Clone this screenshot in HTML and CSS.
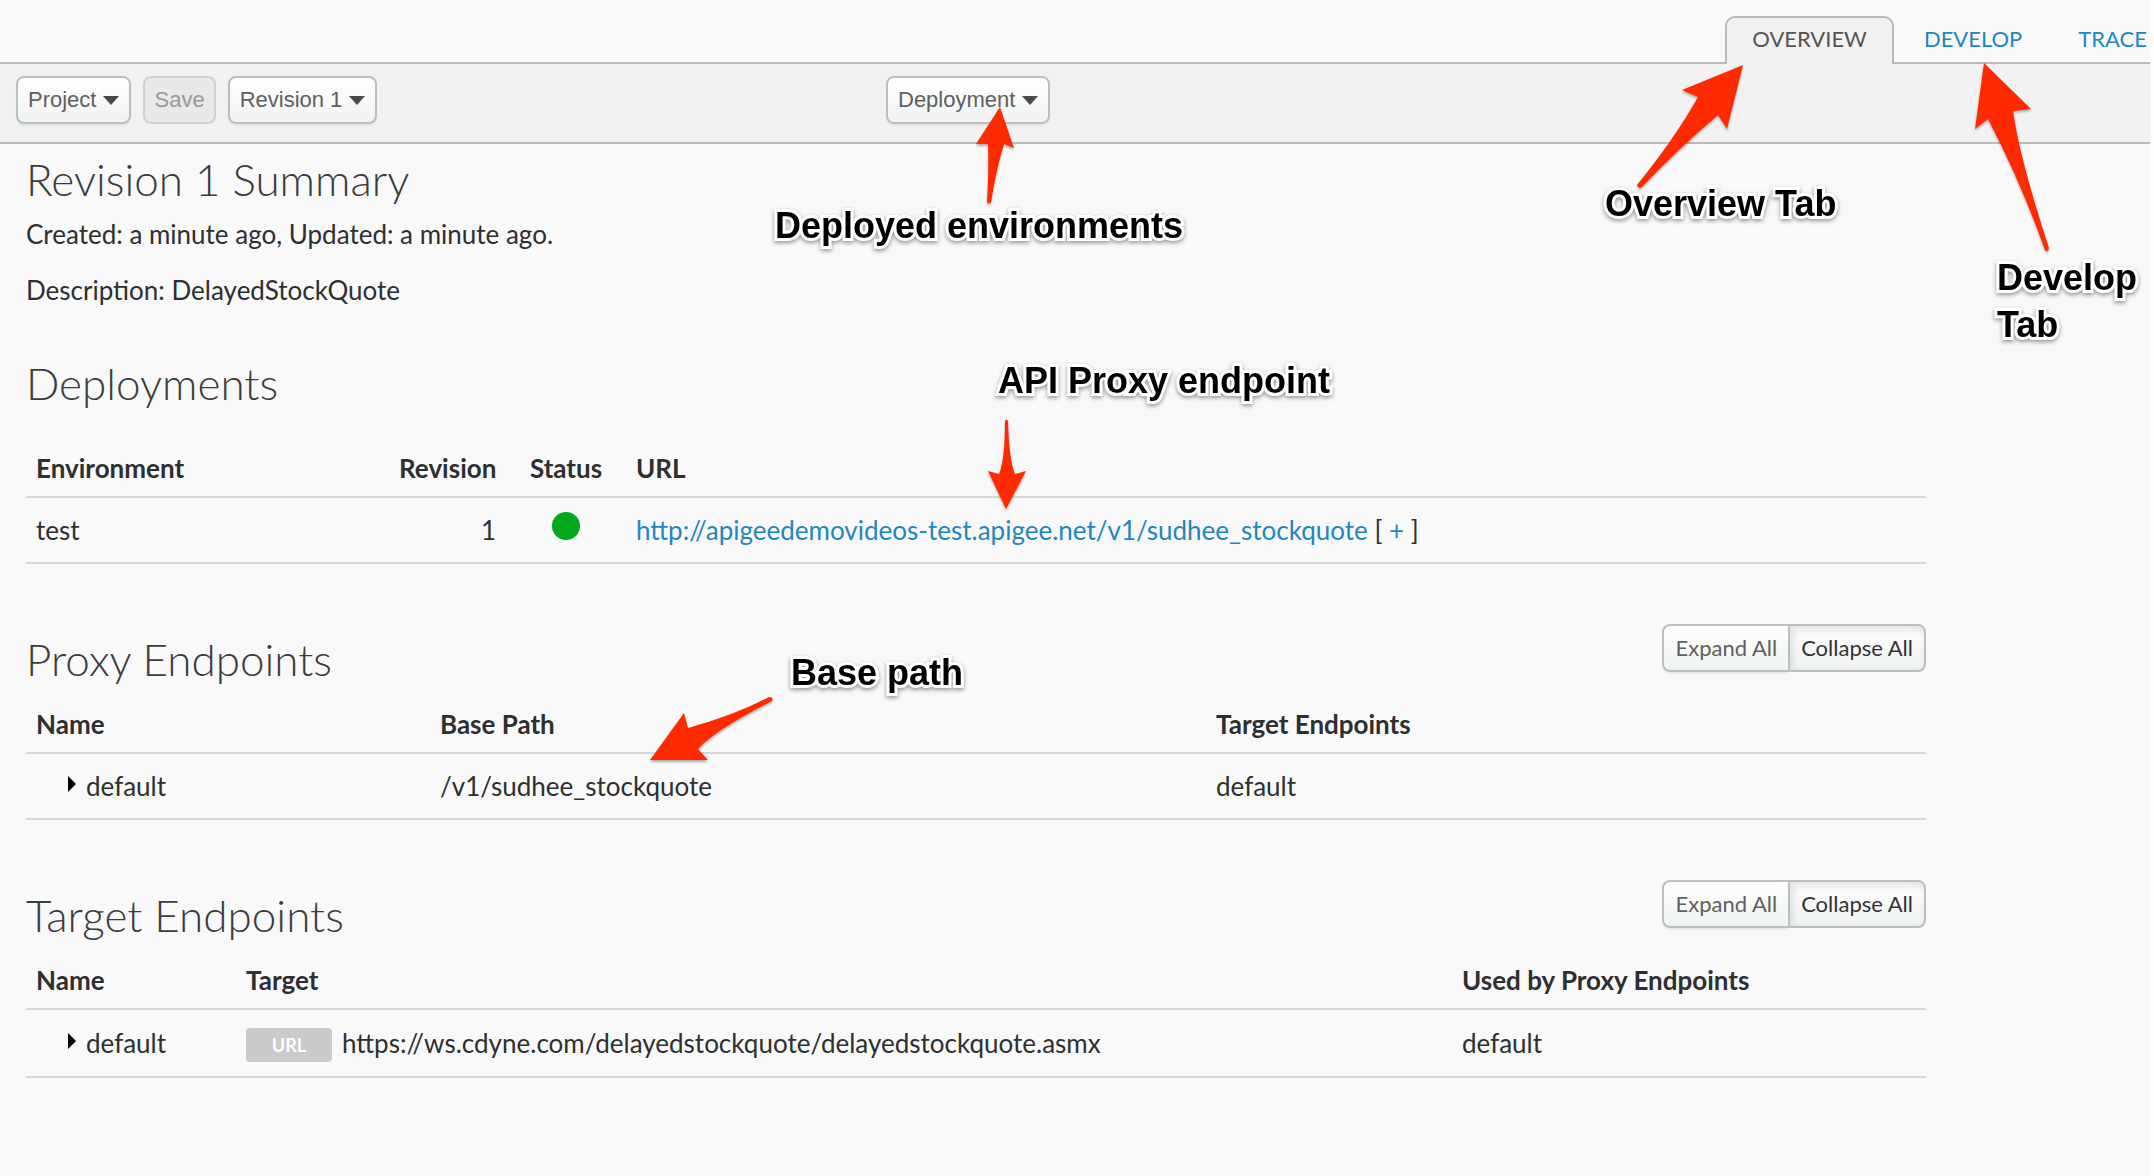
FILE: index.html
```html
<!DOCTYPE html>
<html lang="en">
<head>
<meta charset="utf-8">
<title>API Proxy – Revision 1 Summary</title>
<link rel="stylesheet" href="styles.css">
</head>
<body>
<div class="page">
  <nav class="tabs">
    <a class="tab tab-active" href="#overview">OVERVIEW</a>
    <a class="tab" href="#develop">DEVELOP</a>
    <a class="tab" href="#trace">TRACE</a>
  </nav>

  <div class="toolbar">
    <div class="toolbar-group">
      <button class="button" type="button">Project<span class="caret"></span></button>
      <button class="button" type="button" disabled>Save</button>
      <button class="button" type="button">Revision 1<span class="caret"></span></button>
    </div>
    <button class="button" type="button">Deployment<span class="caret"></span></button>
  </div>

  <main class="content">
    <section class="summary">
      <h2 class="heading">Revision 1 Summary</h2>
      <p class="line">Created: a minute ago, Updated: a minute ago.</p>
      <p class="line">Description: DelayedStockQuote</p>
    </section>

    <section class="deployments">
      <h2 class="heading">Deployments</h2>
      <table class="grid">
        <colgroup><col class="col-environment"><col class="col-revision"><col class="col-status"><col></colgroup>
        <thead>
          <tr><th>Environment</th><th class="right">Revision</th><th>Status</th><th>URL</th></tr>
        </thead>
        <tbody>
          <tr>
            <td>test</td>
            <td class="right">1</td>
            <td class="center"><span class="status-dot"></span></td>
            <td><a href="#endpoint">http://apigeedemovideos-test.apigee.net/v1/sudhee_stockquote</a> [ <a href="#more">+</a> ]</td>
          </tr>
        </tbody>
      </table>
    </section>

    <section class="endpoints">
      <div class="section-head">
        <h2 class="heading">Proxy Endpoints</h2>
        <div class="button-pair">
          <button class="button pair-first" type="button">Expand All</button>
          <button class="button pair-last" type="button">Collapse All</button>
        </div>
      </div>
      <table class="grid">
        <colgroup><col class="col-proxy-name"><col class="col-base-path"><col></colgroup>
        <thead>
          <tr><th>Name</th><th>Base Path</th><th>Target Endpoints</th></tr>
        </thead>
        <tbody>
          <tr><td><span class="disclosure"></span>default</td><td>/v1/sudhee_stockquote</td><td>default</td></tr>
        </tbody>
      </table>
    </section>

    <section class="endpoints">
      <div class="section-head">
        <h2 class="heading">Target Endpoints</h2>
        <div class="button-pair">
          <button class="button pair-first" type="button">Expand All</button>
          <button class="button pair-last" type="button">Collapse All</button>
        </div>
      </div>
      <table class="grid">
        <colgroup><col class="col-target-name"><col class="col-target"><col></colgroup>
        <thead>
          <tr><th>Name</th><th>Target</th><th>Used by Proxy Endpoints</th></tr>
        </thead>
        <tbody>
          <tr>
            <td><span class="disclosure"></span>default</td>
            <td><div class="target"><span class="badge">URL</span>https://ws.cdyne.com/delayedstockquote/delayedstockquote.asmx</div></td>
            <td>default</td>
          </tr>
        </tbody>
      </table>
    </section>
  </main>

  <!-- Callouts drawn over the page -->
  <svg class="arrows" width="2150" height="800" viewBox="0 0 2150 800" aria-hidden="true">
    <path d="M1000 107L1014 148L1004 144Q996 170 991 202Q989 205 987 202Q989 170 988 144L976 144Z"/>
    <path d="M1743 65L1727 129L1718 115Q1680 147 1642 187Q1638 189 1637 185Q1675 138 1698 97L1682 90Z"/>
    <path d="M1984 63L2031 109L2013 111Q2020 160 2049 248Q2048 253 2045 250Q2020 180 1988 119L1975 129Z"/>
    <path d="M1006 509L1026 471L1015 474Q1009 460 1008 421Q1006 418 1005 421Q1005 460 999 474L988 471Z"/>
    <path d="M650 760L684 713L688 728Q735 715 769 697Q774 697 772 701Q715 730 698 749L708 760Z"/>
  </svg>
  <div class="callout callout-deployed">Deployed environments</div>
  <div class="callout callout-overview">Overview Tab</div>
  <div class="callout callout-develop">Develop<br>Tab</div>
  <div class="callout callout-endpoint">API Proxy endpoint</div>
  <div class="callout callout-base-path">Base path</div>
</div>
</body>
</html>
```
FILE: styles.css
```css
* {
  box-sizing: border-box;
}

body {
  margin: 0;
  background: #f9f9f9;
  color: #2d2f31;
  font: 26px/36px Lato, "Open Sans", sans-serif;
}

a {
  color: #1f87c0;
  text-decoration: none;
}

.page {
  position: relative;
  min-height: 100vh;
  overflow: hidden;
  border-right: 4px solid #fdfdfd;
}

/* Tabs */
.tabs {
  display: flex;
  justify-content: flex-end;
  padding: 16px 3px 0 0;
  border-bottom: 2px solid #b8bbba;
}

.tab {
  height: 48px;
  margin-bottom: -2px;
  padding: 0 0 0 56px;
  font-size: 22px;
  line-height: 46px;
}

.tab-active + .tab {
  padding-left: 30px;
}

.tab-active {
  padding: 0 25px;
  border: 2px solid #b8bbba;
  border-bottom: 0;
  border-radius: 10px 10px 0 0;
  background: #f2f2f2;
  color: #555;
  line-height: 42px;
}

/* Toolbar */
.toolbar {
  display: flex;
  height: 80px;
  padding: 12px 16px;
  border-bottom: 2px solid #b8bbba;
  background: #f2f2f2;
}

.toolbar-group {
  display: flex;
  flex: 0 0 870px;
  gap: 12px;
  align-items: flex-start;
}

.button {
  display: flex;
  align-items: center;
  height: 48px;
  padding: 0 10px;
  border: 2px solid #b9c0c1;
  border-radius: 8px;
  background: linear-gradient(#fff, #f1f2f2);
  box-shadow: 0 2px 2px rgba(0, 0, 0, 0.06);
  color: #606060;
  font: 22px/28px "Liberation Sans", Arial, sans-serif;
  white-space: nowrap;
}

.button:disabled {
  padding: 0 9px;
  border-color: #d0d2d2;
  background: #e9e9e9;
  box-shadow: none;
  color: #999;
}

.caret {
  margin-left: 7px;
  border: 8px solid transparent;
  border-top: 9px solid #4a4a4a;
  border-bottom: 0;
}

/* Content */
.content {
  padding: 9px 224px 60px 26px;
}

.heading {
  margin: 0;
  color: #3a3c3e;
  font-size: 44px;
  font-weight: 300;
  line-height: 52px;
}

.line {
  margin: 0 0 20px;
}

.summary .heading {
  margin-bottom: 11px;
}

.deployments {
  margin-top: 49px;
}

.deployments .heading {
  margin-bottom: 27px;
}

.endpoints {
  margin-top: 60px;
}

.section-head {
  display: flex;
  justify-content: space-between;
  align-items: flex-start;
  height: 68px;
}

.section-head .heading {
  padding-top: 9px;
}

.button-pair {
  display: flex;
}

.button-pair .button {
  padding: 0 11px;
  font-family: Lato, "Open Sans", sans-serif;
}

.button-pair .pair-first {
  border-right: 0;
  border-radius: 8px 0 0 8px;
}

.button-pair .pair-last {
  border-radius: 0 8px 8px 0;
  box-shadow: inset 2px 4px 8px rgba(0, 0, 0, 0.12);
  color: #333;
}

.grid {
  width: 100%;
  border-collapse: separate;
  border-spacing: 0;
  table-layout: fixed;
}

.grid th,
.grid td {
  padding: 10px 24px 10px 10px;
  border-bottom: 2px solid #d7d9d9;
  line-height: 44px;
  text-align: left;
  white-space: nowrap;
}

.grid th {
  padding-bottom: 6px;
  font-weight: 700;
}

.grid .right {
  text-align: right;
}

.grid .center {
  text-align: center;
}

.col-environment { width: 363px; }
.col-revision { width: 131px; }
.col-status { width: 106px; }
.col-proxy-name { width: 404px; }
.col-base-path { width: 776px; }
.col-target-name { width: 210px; }
.col-target { width: 1216px; }

.status-dot {
  display: block;
  width: 28px;
  height: 28px;
  margin: 0 auto 8px;
  border-radius: 50%;
  background: #05a81c;
}

.disclosure {
  display: inline-block;
  margin: 0 10px 4px 32px;
  border: 8px solid transparent;
  border-left-color: #000;
  border-right: 0;
}

.target {
  display: flex;
  align-items: center;
  gap: 10px;
  height: 46px;
}

.badge {
  width: 86px;
  height: 34px;
  margin-top: 4px;
  border-radius: 4px;
  background: #cbcbcb;
  color: #fff;
  font-size: 18px;
  font-weight: 700;
  line-height: 34px;
  text-align: center;
}

/* Callouts */
.arrows {
  position: absolute;
  top: 0;
  left: 0;
  fill: #ff2a00;
  filter: drop-shadow(0 2px 1px rgba(0, 0, 0, 0.3));
  pointer-events: none;
}

.callout {
  position: absolute;
  color: #000;
  font: 700 36px/47px "Liberation Sans", Arial, sans-serif;
  white-space: nowrap;
  -webkit-text-stroke: 6px #fff;
  paint-order: stroke fill;
  filter: drop-shadow(0 2px 2px rgba(0, 0, 0, 0.4));
}

.callout-deployed { top: 202px; left: 775px; }
.callout-overview { top: 180px; left: 1605px; }
.callout-develop { top: 254px; left: 1997px; }
.callout-endpoint { top: 357px; left: 998px; }
.callout-base-path { top: 649px; left: 791px; }
```
